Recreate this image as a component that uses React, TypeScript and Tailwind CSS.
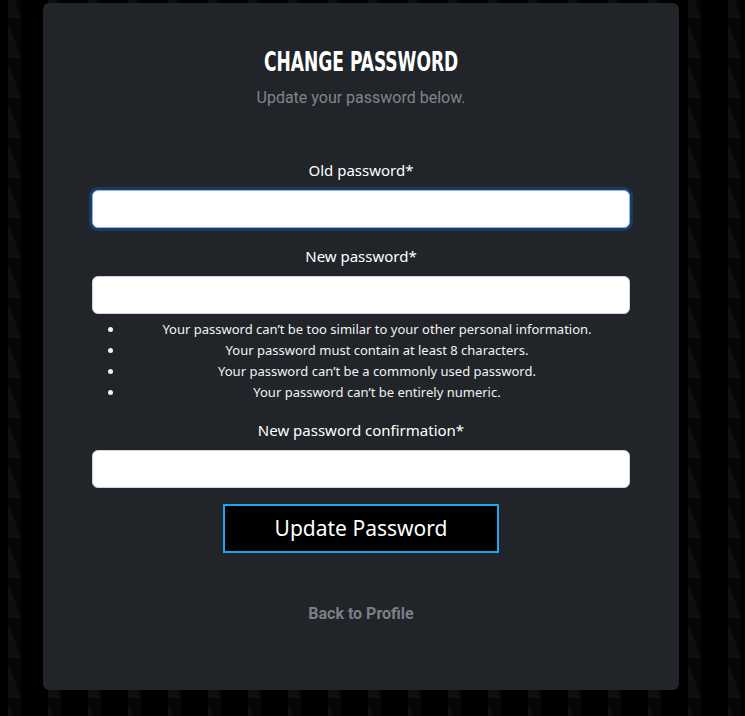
import React from 'react'

const rules = [
  'Your password can’t be too similar to your other personal information.',
  'Your password must contain at least 8 characters.',
  'Your password can’t be a commonly used password.',
  'Your password can’t be entirely numeric.',
]

function Backdrop() {
  return (
    <svg className="absolute inset-0 h-full w-full" aria-hidden="true">
      <defs>
        <pattern id="tri" width="40" height="40" patternUnits="userSpaceOnUse" y="-17">
          <rect x="8" y="0" width="13" height="40" fill="#060606" />
          <polygon points="8,0 21,35 8,35" fill="#0f0f0f" />
        </pattern>
      </defs>
      <rect width="100%" height="100%" fill="url(#tri)" />
    </svg>
  )
}

function Field({ label, focused = false }: { label: string; focused?: boolean }) {
  return (
    <div className="flex flex-col items-center">
      <label className="text-[15px] leading-[20px] text-white [font-family:'Noto_Sans',sans-serif]">{label}</label>
      <input
        type="password"
        className={
          focused
            ? 'mt-[10px] h-[38px] w-full rounded-[6px] border border-[#86b7fe] bg-white shadow-[0_0_0_3px_#1f3a63] outline-none'
            : 'mt-[10px] h-[38px] w-full rounded-[6px] border border-[#ced4da] bg-white outline-none'
        }
      />
    </div>
  )
}

export default function App() {
  return (
    <div className="relative min-h-screen overflow-hidden bg-black">
      <Backdrop />
      <div className="relative ml-[43px] mt-[3px] flex h-[687px] w-[636px] flex-col rounded-[6px] bg-[#212429] px-[49px] pt-[42px]">
        <h1 className="flex justify-center">
          <span className="inline-block origin-center scale-x-[0.73] text-[26px] font-bold leading-[34px] text-white font-stretch-condensed [font-family:'DejaVu_Sans_Condensed','DejaVu_Sans',sans-serif]">
            CHANGE PASSWORD
          </span>
        </h1>
        <p className="mt-[8px] text-center text-[16px] leading-[22px] text-[#80858c] [font-family:Roboto,sans-serif]">
          Update your password below.
        </p>

        <div className="mt-[51px] flex flex-col">
          <Field label="Old password*" focused />
          <div className="mt-[18px]">
            <Field label="New password*" />
          </div>
          <ul className="mt-[5px] list-disc pl-8 text-center text-[13px] leading-[21px] text-[#f2f2f2] [font-family:'Noto_Sans',sans-serif]">
            {rules.map((r) => (
              <li key={r}>{r}</li>
            ))}
          </ul>
          <div className="mt-[17px]">
            <Field label="New password confirmation*" />
          </div>
        </div>

        <div className="mt-[16px] flex justify-center">
          <button className="h-[49px] w-[276px] border-2 border-[#16a8f0] bg-black text-[21px] text-white [font-family:'Noto_Sans',sans-serif]">
            Update Password
          </button>
        </div>

        <a className="mt-[50px] text-center text-[16px] font-bold leading-[22px] text-[#7b7f86] [font-family:Roboto,sans-serif]">
          Back to Profile
        </a>
      </div>
    </div>
  )
}
